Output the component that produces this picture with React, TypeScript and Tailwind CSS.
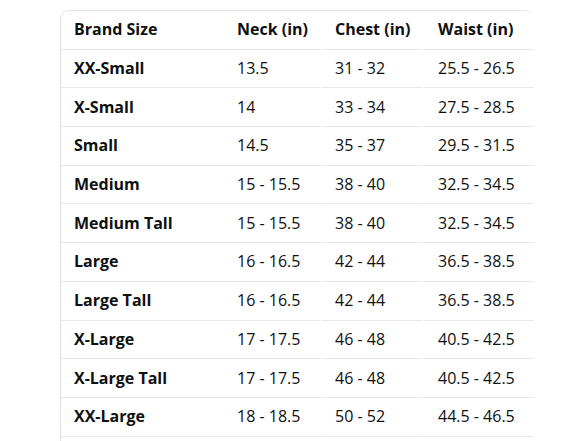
import React from "react";

const rows = [
  ["XX-Small", "13.5", "31 - 32", "25.5 - 26.5"],
  ["X-Small", "14", "33 - 34", "27.5 - 28.5"],
  ["Small", "14.5", "35 - 37", "29.5 - 31.5"],
  ["Medium", "15 - 15.5", "38 - 40", "32.5 - 34.5"],
  ["Medium Tall", "15 - 15.5", "38 - 40", "32.5 - 34.5"],
  ["Large", "16 - 16.5", "42 - 44", "36.5 - 38.5"],
  ["Large Tall", "16 - 16.5", "42 - 44", "36.5 - 38.5"],
  ["X-Large", "17 - 17.5", "46 - 48", "40.5 - 42.5"],
  ["X-Large Tall", "17 - 17.5", "46 - 48", "40.5 - 42.5"],
  ["XX-Large", "18 - 18.5", "50 - 52", "44.5 - 46.5"],
];

function Row({ cells, head }: { cells: string[]; head?: boolean }) {
  return (
    <div className="flex h-[38.7px]">
      <div className="flex w-[162px] items-center border-b border-[#e7e7e7] pb-px pl-[13px] font-bold">
        {cells[0]}
      </div>
      <div className={`flex w-[97px] items-center border-b border-[#e7e7e7] pb-px pl-[14px] ${head ? "font-bold" : ""}`}>
        {cells[1]}
      </div>
      <div className={`ml-px flex w-[102px] items-center border-b border-[#e7e7e7] pb-px pl-[14px] ${head ? "font-bold" : ""}`}>
        {cells[2]}
      </div>
      <div className={`ml-px flex w-[110px] items-center border-b border-[#e7e7e7] pb-px pl-[14px] ${head ? "font-bold" : ""}`}>
        {cells[3]}
      </div>
    </div>
  );
}

export default function App() {
  return (
    <div className="h-[441px] overflow-hidden bg-white pt-[10px] pl-[60px] font-['Open_Sans',sans-serif] text-[16px] text-[#0f1111]">
      <div className="w-[474px] rounded-t-[9px] border-t border-l border-[#e3e3e3]">
        <Row cells={["Brand Size", "Neck (in)", "Chest (in)", "Waist (in)"]} head />
        {rows.map((r) => (
          <Row key={r[0]} cells={r} />
        ))}
        <div className="h-[20px]" />
      </div>
    </div>
  );
}
